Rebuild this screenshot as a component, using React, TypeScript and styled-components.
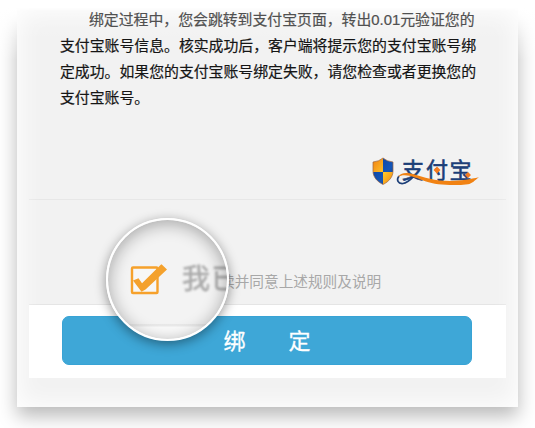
import React from "react";
import styled, { createGlobalStyle } from "styled-components";

const GlobalStyle = createGlobalStyle`
  * { box-sizing: border-box; }
  html, body { margin: 0; background: #fff; overflow: hidden; }
  body { font-family: "Liberation Sans", "Noto Sans CJK SC", sans-serif; }
`;

const Page = styled.main`
  width: 535px;
  height: 428px;
  padding: 7px 17px 21px;
  overflow: hidden;
`;

const Card = styled.section`
  position: relative;
  height: 400px;
  width: 501px;
  padding: 0 12px;
  background: #f2f2f2;
  box-shadow: 0 9px 18px rgba(0, 0, 0, 0.28);
  &::after {
    content: "";
    position: absolute;
    inset: 0;
    box-shadow: inset 0 0 24px 2px #fff;
    pointer-events: none;
  }
`;

const TopFade = styled.div`
  position: absolute;
  left: -17px;
  top: -7px;
  width: 535px;
  height: 50px;
  background: linear-gradient(#fff 7px, rgba(255, 255, 255, 0.25) 11px, rgba(255, 255, 255, 0) 40px);
`;

const Sides = styled.div`
  position: absolute;
  left: -17px;
  top: -7px;
  width: 535px;
  height: 60px;
  display: flex;
  justify-content: space-between;
  &::before,
  &::after {
    content: "";
    width: 17px;
    background: linear-gradient(#fff 12%, rgba(255, 255, 255, 0));
  }
`;

const Rules = styled.div`
  height: 193px;
  padding: 0 0 0 31px;
  border-bottom: 1px solid #e7e7e7;
`;

const Copy = styled.p`
  position: relative;
  z-index: 1;
  margin: 0;
  height: 104px;
  font-size: 14.87px;
  line-height: 26px;
  white-space: nowrap;
  -webkit-text-stroke: 0.2px currentColor;
`;

const Line = styled.span<{ $first?: boolean }>`
  display: block;
  height: 26px;
  padding-left: ${(p) => (p.$first ? "29px" : "0")};
  color: ${(p) => (p.$first ? "#505050" : "#151515")};
`;

const Logo = styled.svg`
  display: block;
  width: 110px;
  height: 34px;
  margin: 44px 0 0 310px;
`;

const Agreement = styled.div`
  height: 105px;
  padding: 69px 0 0 191px;
  border-bottom: 1px solid #e5e5e5;
  color: #a8a8a8;
  font-size: 14.67px;
  line-height: 26px;
  white-space: nowrap;
`;

const Actions = styled.div`
  height: 73px;
  padding: 11px 35px 0 33px;
  background: #fff;
  position: relative;
  z-index: 1;
`;

const BindButton = styled.button`
  display: flex;
  justify-content: center;
  gap: 43px;
  width: 410px;
  height: 49px;
  padding: 0;
  border: 1px solid #38a3d5;
  border-radius: 7px;
  background: #3ea7d7;
  color: #fff;
  font: 22px/45px "Noto Sans CJK SC", sans-serif;
  -webkit-text-stroke: 0.3px #fff;
`;

const Lens = styled.div`
  position: absolute;
  z-index: 2;
  left: 89px;
  top: 211px;
  width: 123px;
  height: 123px;
  border: 2px solid #fff;
  border-radius: 50%;
  overflow: hidden;
  background: linear-gradient(#f3f3f3 104px, #e8e8e8 104px, #ebebeb 106px, #fbfbfb 107px);
  box-shadow: 0 3px 12px rgba(0, 0, 0, 0.42);
  &::after {
    content: "";
    position: absolute;
    inset: 0;
    border-radius: 50%;
    box-shadow: inset 0 3px 17px rgba(0, 0, 0, 0.33);
  }
`;

const LensContent = styled.div`
  display: flex;
  align-items: flex-start;
  padding: 41px 0 0 21px;
  white-space: nowrap;
`;

const CheckMark = styled.svg`
  flex: none;
  width: 40px;
  height: 36px;
  filter: blur(0.3px);
`;

const LensText = styled.span`
  margin: -4px 0 0 13px;
  color: #aaa;
  font: 28px/40px "Noto Sans CJK SC", sans-serif;
  letter-spacing: 1.5px;
  -webkit-text-stroke: 0.6px #aaa;
  filter: blur(0.8px);
`;

const AlipayLogo = () => (
  <Logo viewBox="0 0 110 34" role="img" aria-label="支付宝">
    <defs>
      <linearGradient id="gold" x1="0" y1="0" x2="1" y2="1">
        <stop offset="0" stopColor="#f07a10" />
        <stop offset=".55" stopColor="#ffc52a" />
        <stop offset="1" stopColor="#ee7c0a" />
      </linearGradient>
      <linearGradient id="navy" x1="0" y1="0" x2="1" y2="1">
        <stop offset="0" stopColor="#0c3c96" />
        <stop offset=".6" stopColor="#1556b8" />
        <stop offset="1" stopColor="#123477" />
      </linearGradient>
      <clipPath id="shield">
        <path d="M13 3Q17 6.500 23 7V16C23 22 19 26.500 13 29.500C7 26.500 3 22 3 16V7Q9 6.500 13 3Z" />
      </clipPath>
    </defs>
    <g clipPath="url(#shield)">
      <path d="M2 2h11v15H2zM13 17h11v14H13z" fill="url(#gold)" />
      <path d="M13 2h11v15H13zM2 17h11v14H2z" fill="url(#navy)" />
    </g>
    <path d="M13 3Q17 6.500 23 7V16C23 22 19 26.500 13 29.500C7 26.500 3 22 3 16V7Q9 6.500 13 3Z" fill="none" stroke="#9c6540" strokeWidth=".7" />
    <text x="32 56 79.5" y="22.500" fill="#1d3f78" stroke="#1d3f78" strokeWidth=".6" fontFamily="Noto Sans CJK SC, sans-serif" fontSize="22">
      支付宝
    </text>
    <path d="M29 21C26 25 28 29 33 28.500C38 28 41 24 45 20" fill="none" stroke="#1d3f78" strokeWidth="1.7" />
    <path d="M28 22C30 17.500 37 17 43 19C54 22.500 65 26 80 26C92 26 100 24 109 22.300C105 25 102 29 98 29.200C84 31 66 30 56 26.500C46 23 35 17.500 28 22Z" fill="#f18213" />
    <path d="M67 11.500l3.500 3.500-3.500 3.500-3.500-3.500zM98 17l3 3-3 3-3-3z" fill="#f47b20" />
  </Logo>
);

export default function App() {
  return (
    <>
      <GlobalStyle />
      <Page>
        <Card>
          <TopFade />
          <Sides />
          <Rules>
            <Copy>
              <Line $first>绑定过程中，您会跳转到支付宝页面，转出0.01元验证您的</Line>
              <Line>支付宝账号信息。核实成功后，客户端将提示您的支付宝账号绑</Line>
              <Line>定成功。如果您的支付宝账号绑定失败，请您检查或者更换您的</Line>
              <Line>支付宝账号。</Line>
            </Copy>
            <AlipayLogo />
          </Rules>
          <Agreement>读并同意上述规则及说明</Agreement>
          <Actions>
            <BindButton>
              <span>绑</span>
              <span>定</span>
            </BindButton>
          </Actions>
          <Lens>
            <LensContent>
              <CheckMark viewBox="0 0 40 36">
                <rect x="3" y="6.500" width="25.500" height="25.500" rx="1" fill="#f7f7f6" stroke="#f6a12b" strokeWidth="2.400" />
                <path d="M4 19.500l5.500-2.300 3.500 5L31.500 4l1-.8 5.500 5.300L16.500 28.500l-4 2.200z" fill="#f4a12c" />
              </CheckMark>
              <LensText>我已</LensText>
            </LensContent>
          </Lens>
        </Card>
      </Page>
    </>
  );
}
